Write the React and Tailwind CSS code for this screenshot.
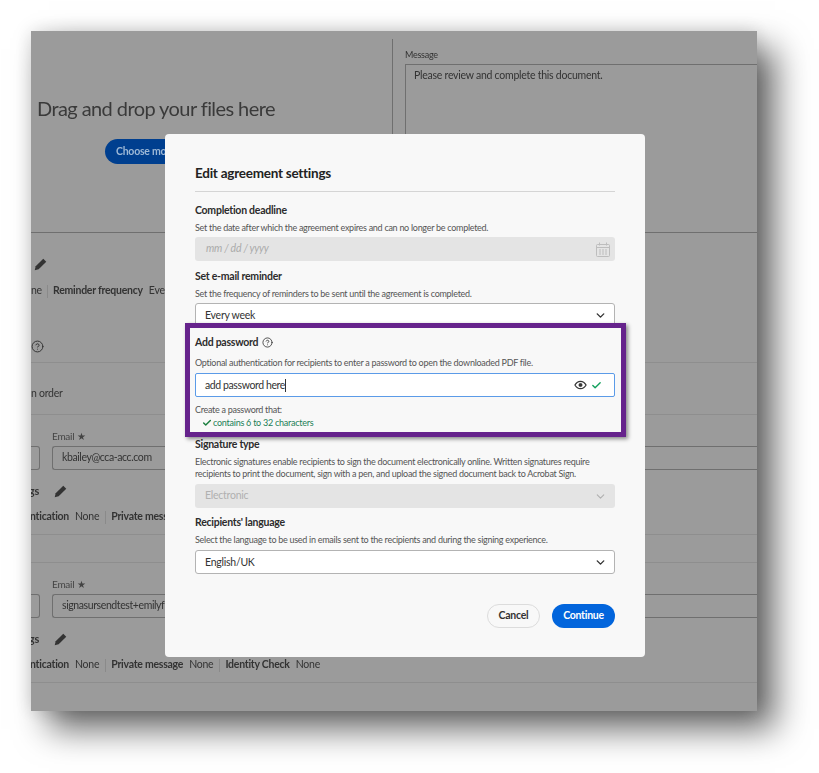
import React from "react";
import { Check, ChevronDown, CircleHelp } from "lucide-react";

function Pencil({ className }) {
  return (
    <svg viewBox="0 0 14 14" className={className} fill="currentColor">
      <path d="M10 .8 13.200 4 5 12.200 .8 13.200 1.800 9z" />
    </svg>
  );
}

function EyeIcon() {
  return (
    <svg viewBox="0 0 14 10" className="w-[13px] h-[10px] text-[#333]" fill="none" stroke="currentColor">
      <path d="M1 5c1.500-2.600 3.500-4 6-4s4.500 1.400 6 4c-1.500 2.600-3.500 4-6 4S2.500 7.600 1 5z" strokeWidth="1.300" />
      <circle cx="7" cy="5" r="1.800" fill="currentColor" strokeWidth="0.600" />
    </svg>
  );
}

function CalendarIcon() {
  return (
    <svg viewBox="0 0 14 15" className="w-[14px] h-[15px] text-[#bdbdbd]" fill="none" stroke="currentColor" strokeWidth="1">
      <rect x="0.500" y="2.500" width="13" height="12" rx="1" />
      <path d="M3.500 0.500v3M10.500 0.500v3M0.500 5.500h13" />
      <path d="M3 8h8M3 10h8M3 12h8" strokeDasharray="2 1" />
    </svg>
  );
}

function MetaRow({ children, className }) {
  return <div className={"flex items-center h-[14px] text-[10.5px] whitespace-nowrap " + className}>{children}</div>;
}

function Sep() {
  return <span className="w-px h-[13px] bg-[#8a8a8a] ml-[6px] mr-[5px]" />;
}

function RecipientRow({ email, extra }) {
  return (
    <div className="h-[120px] border-b border-[#8e8e8e] pt-[14px]">
      <div className="ml-[21px] text-[10px] leading-[14px] text-[#444]">Email ★</div>
      <div className="mt-[3px] flex h-[24px] gap-[12px]">
        <div className="w-[9px] border-y border-r border-[#6f6f6f] rounded-r-[3px]" />
        <div className="flex-1 flex items-center pl-[9px] border-y border-l border-[#6f6f6f] rounded-l-[3px] text-[10.5px] tracking-[-0.4px] text-[#333] whitespace-nowrap">
          {email}
        </div>
      </div>
      <div className="mt-[13px] h-[17px] flex items-center">
        <span className="w-[8px] flex justify-end overflow-hidden text-[11px] font-bold text-[#333]">gs</span>
        <Pencil className="ml-[15px] w-[13px] h-[13px] text-[#333]" />
      </div>
      <MetaRow className="mt-[10px] text-[#333]">
        <span className="w-[38px] overflow-hidden flex justify-end font-bold">Authentication</span>
        <span className="ml-[6px]">None</span>
        <Sep />
        <span className="font-bold">Private message</span>
        <span className="ml-[6px]">None</span>
        {extra && (
          <>
            <Sep />
            <span className="font-bold">Identity Check</span>
            <span className="ml-[6px]">None</span>
          </>
        )}
      </MetaRow>
    </div>
  );
}

function Label({ children, className = "" }) {
  return <div className={"text-[10.5px] leading-[14px] font-bold text-[#2c2c2c] " + className}>{children}</div>;
}

function Help({ children, className = "" }) {
  return <p className={"text-[9px] leading-[12px] tracking-[-0.28px] text-[#555] whitespace-nowrap " + className}>{children}</p>;
}

function SelectBox({ value, className = "" }) {
  return (
    <div className={"h-[24px] flex items-center justify-between pl-[9px] pr-[7px] bg-white border border-[#b3b3b3] rounded-[3px] text-[10.5px] text-[#333] " + className}>
      <span className="pt-[1px]">{value}</span>
      <ChevronDown className="w-[13px] h-[13px]" strokeWidth={2.6} />
    </div>
  );
}

function SettingsModal() {
  return (
    <div className="absolute left-[134px] top-[103px] w-[480px] h-[523px] bg-[#f8f8f8] rounded-[4px] px-[30px] pt-[29px]">
      <h2 className="text-[13.5px] leading-[20px] font-bold text-[#222]">Edit agreement settings</h2>
      <div className="mt-[8px] h-px bg-[#d5d5d5]" />

      <Label className="mt-[11px]">Completion deadline</Label>
      <Help className="mt-[5px]">Set the date after which the agreement expires and can no longer be completed.</Help>
      <div className="mt-[3px] h-[24px] flex items-center justify-between pl-[11px] pr-[5px] bg-[#e4e4e4] rounded-[3px] text-[10.5px] italic text-[#aaa]">
        <span>mm / dd / yyyy</span>
        <CalendarIcon />
      </div>

      <Label className="mt-[8px]">Set e-mail reminder</Label>
      <Help className="mt-[5px]">Set the frequency of reminders to be sent until the agreement is completed.</Help>
      <SelectBox value="Every week" className="mt-[3px]" />

      <section className="relative -mt-[4px] -ml-[10px] -mr-[11px] h-[114px] pl-[5px] pr-[6px] pt-[7px] bg-[#f8f8f8] border-[5px] border-[#66238c] shadow-[2px_2px_4px_rgba(0,0,0,0.45)]">
        <div className="flex items-center gap-[4px]">
          <Label>Add password</Label>
          <CircleHelp className="w-[11px] h-[11px] text-[#333]" strokeWidth={1.8} />
        </div>
        <Help className="mt-[8px]">Optional authentication for recipients to enter a password to open the downloaded PDF file.</Help>
        <div className="mt-[4px] h-[24px] flex items-center pl-[9px] pr-[12px] bg-white border border-[#5b9be8] rounded-[2px] text-[10.5px] tracking-[-0.4px] text-[#333]">
          <span className="border-r border-[#333] leading-[13px]">add password here</span>
          <span className="ml-auto flex items-center gap-[4px]">
            <EyeIcon />
            <Check className="w-[11px] h-[11px] text-[#12a05c]" strokeWidth={3} />
          </span>
        </div>
        <Help className="mt-[7px] text-[#444]">Create a password that:</Help>
        <div className="mt-[1px] ml-[7px] flex items-center gap-px h-[12px] text-[9px] text-[#1b7f57]">
          <Check className="w-[10px] h-[10px] text-[#1b7f3f]" strokeWidth={3.5} />
          <span>contains 6 to 32 characters</span>
        </div>
      </section>

      <Label>Signature type</Label>
      <Help className="mt-[5px]">
        Electronic signatures enable recipients to sign the document electronically online. Written signatures require
        <br />
        recipients to print the document, sign with a pen, and upload the signed document back to Acrobat Sign.
      </Help>
      <div className="mt-[4px] h-[24px] flex items-center justify-between pl-[10px] pr-[8px] bg-[#e4e4e4] rounded-[3px] text-[10.5px] text-[#b0b0b0]">
        <span>Electronic</span>
        <ChevronDown className="w-[13px] h-[13px]" strokeWidth={2} />
      </div>

      <Label className="mt-[7px]">Recipients' language</Label>
      <Help className="mt-[5px]">Select the language to be used in emails sent to the recipients and during the signing experience.</Help>
      <SelectBox value="English/UK" className="mt-[4px]" />

      <div className="mt-[30px] flex justify-end gap-[12px]">
        <button className="w-[53px] h-[24px] rounded-full border border-[#dcdcdc] text-[10.5px] font-bold text-[#333]">Cancel</button>
        <button className="w-[63px] h-[24px] rounded-full bg-[#0265dc] text-[10.5px] font-bold text-white">Continue</button>
      </div>
    </div>
  );
}

export default function App() {
  return (
    <div className="w-[819px] h-[773px] bg-white p-[31px] overflow-hidden font-['Lato',sans-serif] tracking-[-0.25px]">
      <div className="relative w-[726px] h-[680px] overflow-hidden bg-[#9b9b9b] shadow-[18px_18px_32px_rgba(0,0,0,0.6),0_0_18px_rgba(0,0,0,0.15)] blur-[0.35px]">
        {/* top: drop zone and message */}
        <div className="flex h-[202px] border-b border-[#6f6f6f]">
          <div className="w-[361px] pl-[6px] pt-[64px]">
            <div className="text-[20px] leading-[26px] tracking-[-0.58px] text-[#3a3a3a]">Drag and drop your files here</div>
            <div className="mt-[18px] ml-[68px] w-[130px] h-[25px] flex items-center pl-[11px] rounded-full bg-[#003f8f] text-[10.5px] font-bold text-[#9db8d6]">
              Choose more files
            </div>
          </div>
          <div className="flex-1 mt-[8px] border-l border-[#6f6f6f] pl-[12px] pt-[10px]">
            <div className="text-[9px] leading-[12px] text-[#333]">Message</div>
            <div className="mt-[3px] h-[170px] border-l border-t border-[#6f6f6f] pl-[8px] pt-[3px] text-[10.5px] text-[#333]">
              Please review and complete this document.
            </div>
          </div>
        </div>

        {/* reminder and password summary */}
        <div className="h-[130px] border-b border-[#8e8e8e] pt-[25px]">
          <Pencil className="ml-[3px] w-[13px] h-[13px] text-[#333]" />
          <MetaRow className="mt-[13px] text-[#333]">
            <span className="w-[10px]">ne</span>
            <Sep />
            <span className="font-bold">Reminder frequency</span>
            <span className="ml-[6px]">Every week</span>
          </MetaRow>
          <CircleHelp className="mt-[42px] w-[13px] h-[13px] text-[#333]" strokeWidth={1.8} />
        </div>

        <div className="h-[52px] border-b border-[#8e8e8e] pt-[23px] text-[10.5px] leading-[14px] text-[#333]">n order</div>

        <RecipientRow email="kbailey@cca-acc.com" />
        <div className="h-[28px] border-b border-[#8e8e8e]" />
        <RecipientRow email="signasursendtest+emilyf@gmail.com" extra />

        <SettingsModal />
      </div>
    </div>
  );
}
